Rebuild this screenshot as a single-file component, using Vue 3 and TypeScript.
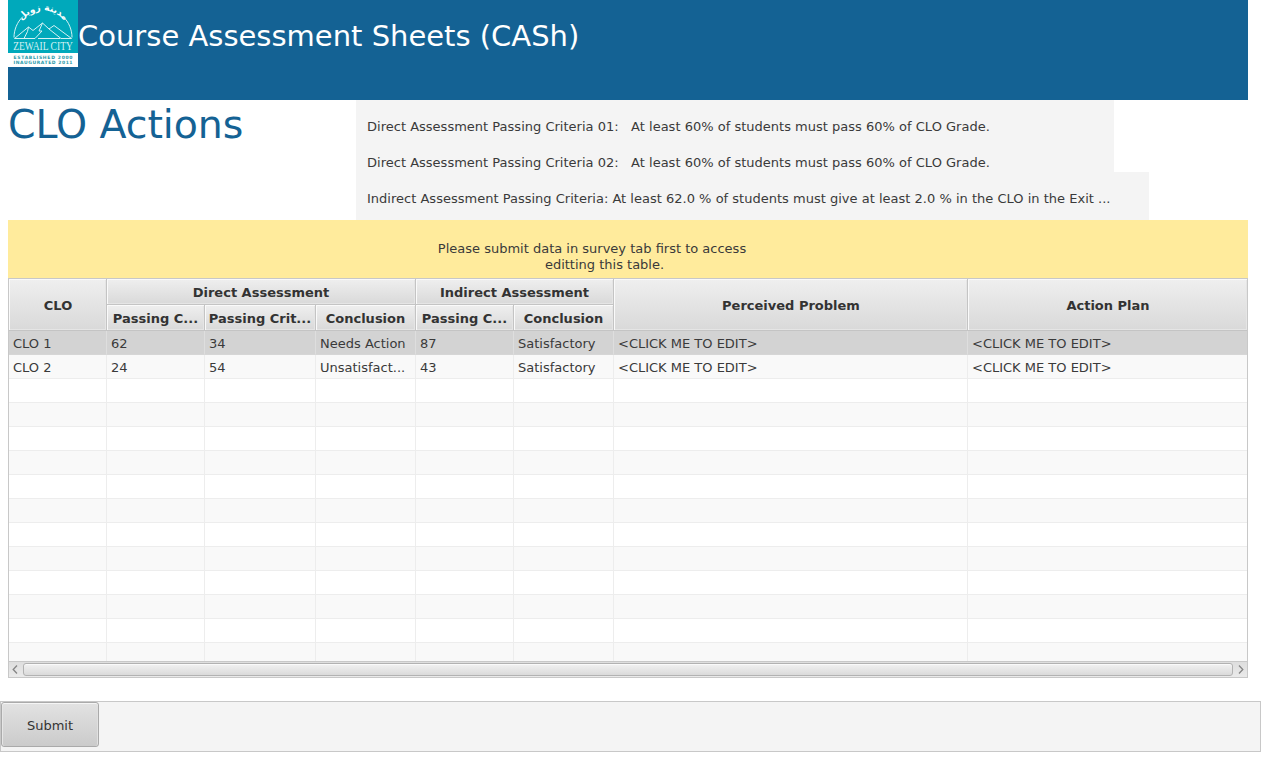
<script setup lang="ts">
interface Row {
  cells: string[]
  selected?: boolean
}

const criteria: string[] = [
  'Direct Assessment Passing Criteria 01:   At least 60% of students must pass 60% of CLO Grade.',
  'Direct Assessment Passing Criteria 02:   At least 60% of students must pass 60% of CLO Grade.',
  'Indirect Assessment Passing Criteria: At least 62.0 % of students must give at least 2.0 % in the CLO in the Exit ...',
]

const edit = '<CLICK ME TO EDIT>'
const blank: string[] = Array(8).fill('')
const rows: Row[] = [
  { cells: ['CLO 1', '62', '34', 'Needs Action', '87', 'Satisfactory', edit, edit], selected: true },
  { cells: ['CLO 2', '24', '54', 'Unsatisfact...', '43', 'Satisfactory', edit, edit] },
  ...Array.from({ length: 12 }, () => ({ cells: blank })),
]
</script>

<template>
  <div class="app">
    <header class="banner">
      <svg class="logo" width="70" height="67" viewBox="0 0 70 67">
        <rect width="70" height="53" fill="#00a9bb" />
        <rect y="53" width="70" height="14" fill="#fff" />
        <defs><path id="arc" d="M14 20.500 A27 27 0 0 1 56 20.500" /></defs>
        <text class="arabic"><textPath href="#arc" startOffset="50%" text-anchor="middle">مدينة زويل</textPath></text>
        <g fill="none" stroke="#d5f2f4" stroke-width="1" stroke-linejoin="round">
          <path d="M6 37.500 C6 30 9 22 15 16.500 M64 37.500 C64 30 61 22 55 16.500" />
          <path d="M6.500 38.500 L20.500 27 L25 30.500 L34.500 23 L41 29 L46 25.500 L63.500 38.500" />
          <path d="M6.500 38.500 H27 L34 31 L31 31 L34.500 23 M20.500 27 L19.500 31.500 L16 38.500 M41 29 L53 38.500 H63.500 M30 38.500 H52" />
        </g>
        <text class="city" transform="translate(35 50) scale(0.83 1)" text-anchor="middle">ZEWAIL CITY</text>
        <text class="years" x="5.500" y="59.300" textLength="59">ESTABLISHED 2000</text>
        <text class="years" x="5.500" y="64.300" textLength="59">INAUGURATED 2011</text>
      </svg>
      <h1>Course Assessment Sheets (CASh)</h1>
    </header>

    <section class="intro">
      <h2>CLO Actions</h2>
      <div class="criteria">
        <p v-for="(line, i) in criteria" :key="i" :class="{ wide: i === 2 }">{{ line }}</p>
      </div>
    </section>

    <div class="notice">
      <p>Please submit data in survey tab first to access</p>
      <p class="second">editting this table.</p>
    </div>

    <div class="table">
      <div class="grid head">
        <div class="th tall">CLO</div>
        <div class="th direct">Direct Assessment</div>
        <div class="th indirect">Indirect Assessment</div>
        <div class="th tall problem">Perceived Problem</div>
        <div class="th tall last">Action Plan</div>
        <div class="th">Passing C...</div>
        <div class="th">Passing Crit...</div>
        <div class="th">Conclusion</div>
        <div class="th">Passing C...</div>
        <div class="th">Conclusion</div>
      </div>
      <div class="body">
        <div v-for="(row, r) in rows" :key="r" class="grid row" :class="{ odd: r % 2, selected: row.selected }">
          <div v-for="(cell, c) in row.cells" :key="c" class="td">{{ cell }}</div>
        </div>
      </div>
      <div class="scroll">
        <svg width="14" height="15" viewBox="0 0 14 15"><path d="M8 3.500 L4.200 7.500 L8 11.500" /></svg>
        <div class="thumb"></div>
        <svg width="14" height="15" viewBox="0 0 14 15"><path d="M6 3.500 L9.800 7.500 L6 11.500" /></svg>
      </div>
    </div>

    <footer class="toolbar"><button type="button">Submit</button></footer>
  </div>
</template>

<style>
body { margin: 0; background: #fff; overflow: hidden; }
</style>

<style scoped>
.app {
  width: 1261px;
  height: 777px;
  box-sizing: border-box;
  font: 13px/16px "DejaVu Sans", sans-serif;
  color: #3a3a3a;
}
h1, h2, p { margin: 0; font-weight: normal; }
.banner, .intro, .notice, .table { margin: 0 13px 0 8px; box-sizing: border-box; }
.banner { height: 100px; display: flex; align-items: flex-start; background: #146294; }
.logo { display: block; flex: none; }
.arabic { font: bold 9px "DejaVu Sans", sans-serif; fill: #fff; }
.city { font: 11.5px "Liberation Serif", serif; fill: #d5f2f4; }
.years { font: bold 4.5px "DejaVu Sans", sans-serif; fill: #2b9aaa; }
h1 { font-size: 29px; line-height: 36px; padding-top: 18px; color: #fff; white-space: nowrap; }
.intro { height: 120px; display: flex; }
h2 { width: 348px; font-size: 39.5px; line-height: 49px; letter-spacing: -0.07px; color: #146294; }
.criteria p {
  box-sizing: border-box;
  width: 758px;
  height: 36px;
  padding: 19px 0 0 11px;
  background: #f4f4f4;
  letter-spacing: 0.01px;
  white-space: pre;
}
.criteria p.wide { width: 793px; height: 48px; }
.notice { height: 58px; padding-top: 21px; background: #ffeb9c; text-align: center; }
.notice p { width: 1168px; }
.notice .second { width: 1193px; }
.table { height: 400px; border: 1px solid #c8c8c8; overflow: hidden; }
.grid { display: grid; grid-template-columns: 98px 98px 111px 100px 98px 100px 354px 279px; }
.head { grid-template-rows: 26px 26px; background: #ddd; }
.th {
  display: flex;
  align-items: center;
  justify-content: center;
  border-right: 1px solid #c4c4c4;
  border-bottom: 1px solid #c4c4c4;
  font-weight: bold;
  color: #333;
  white-space: nowrap;
  padding: 3px 0 0;
  box-sizing: border-box;
  background: linear-gradient(#efefef, #d9d9d9);
  box-shadow: inset 1px 1px #fafafa, inset -1px -1px #e5e5e5;
}
.th.tall { grid-row: 1 / 3; padding: 2px 0 0 1px; }
.th.direct { grid-area: 1 / 2 / 2 / 5; }
.th.indirect { grid-area: 1 / 5 / 2 / 7; }
.th.problem { grid-column: 7; }
.th.last { border-right: 0; grid-column: 8; }
.body { height: 330px; overflow: hidden; }
.td {
  box-sizing: border-box;
  height: 24px;
  padding: 5px 0 0 4px;
  border-right: 1px solid #ededed;
  border-bottom: 1px solid #ededed;
  line-height: 16px;
  white-space: nowrap;
}
.td:last-child { border-right: 0; }
.odd { background: #f9f9f9; }
.selected { background: #d3d3d3; }
.selected .td { border-right-color: #dedede; border-bottom-color: #d6d6d6; }
.scroll {
  box-sizing: border-box;
  height: 16px;
  display: flex;
  border-top: 1px solid #c8c8c8;
  background: linear-gradient(#dedede, #eaeaea);
}
.scroll path { fill: none; stroke: #858585; stroke-width: 1.3; }
.thumb {
  box-sizing: border-box;
  flex: 1;
  height: 13px;
  margin-top: 1px;
  border: 1px solid #b2b2b2;
  border-radius: 3px;
  background: linear-gradient(#f2f2f2, #dadada);
  box-shadow: inset 0 1px #fafafa;
}
.toolbar {
  box-sizing: border-box;
  height: 51px;
  margin-top: 23px;
  border: 1px solid #c8c8c8;
  background: #f4f4f4;
  display: flex;
  align-items: flex-start;
}
button {
  width: 98px;
  height: 45px;
  margin: 0;
  padding: 3px 0 0;
  border: 1px solid #aaa;
  border-radius: 3px;
  background: linear-gradient(#e2e2e2, #cbcbcb);
  box-shadow: inset 0 1px #f5f5f5, inset 1px 0 #e6e6e6, inset -1px 0 #e0e0e0;
  font: inherit;
  color: #333;
}
</style>
